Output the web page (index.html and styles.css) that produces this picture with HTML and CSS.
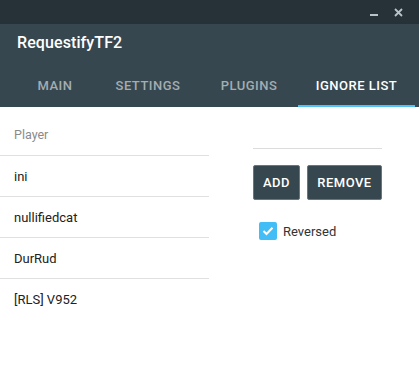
FILE: index.html
```html
<!DOCTYPE html>
<html lang="en">
<head>
    <meta charset="UTF-8">
    <meta name="viewport" content="width=device-width, initial-scale=1.0">
    <title>RequestifyTF2</title>
    <link rel="stylesheet" href="styles.css">
</head>
<body>

<div class="window">
    <div class="titlebar">
        <span class="win-btn win-min"></span>
        <span class="win-btn win-close">
            <svg width="9" height="9" viewBox="0 0 9 9"><path d="M1 1L8 8M8 1L1 8" stroke="#b9c3c8" stroke-width="1.8"/></svg>
        </span>
    </div>

    <div class="header">
        <div class="app-title">RequestifyTF2</div>
        <div class="tabs">
            <div class="tab">MAIN</div>
            <div class="tab">SETTINGS</div>
            <div class="tab">PLUGINS</div>
            <div class="tab active">IGNORE LIST</div>
        </div>
    </div>

    <div class="content">
        <div class="player-list">
            <div class="row head">Player</div>
            <div class="row">ini</div>
            <div class="row">nullifiedcat</div>
            <div class="row">DurRud</div>
            <div class="row last">[RLS] V952</div>
        </div>

        <div class="side">
            <div class="text-field"></div>
            <div class="actions">
                <button class="btn btn-add">ADD</button>
                <button class="btn btn-remove">REMOVE</button>
            </div>
            <label class="check">
                <span class="check-box">
                    <svg width="12" height="10" viewBox="0 0 12 10"><path d="M1.5 5L4.5 8L10.5 1.8" fill="none" stroke="#fff" stroke-width="2"/></svg>
                </span>
                Reversed
            </label>
        </div>
    </div>
</div>

</body>
</html>
```

FILE: styles.css
```css
body { margin: 0; font-family: Roboto, "Liberation Sans", sans-serif; background: #fff; }
.window { width: 419px; height: 368px; overflow: hidden; }

.titlebar { height: 24px; background: #263238; display: flex; justify-content: flex-end; align-items: center; padding-right: 16px; gap: 16px; box-sizing: border-box; }
.win-btn { display: block; width: 9px; height: 9px; position: relative; }
.win-min::after { content: ""; position: absolute; left: 1px; top: 6px; width: 8px; height: 2px; background: #b9c3c8; }
.win-close svg { display: block; }

.header { background: #37474f; height: 83px; box-sizing: border-box; }
.app-title { color: #fff; font-size: 16px; font-weight: 500; line-height: 20px; padding: 9px 0 0 17px; height: 39px; box-sizing: border-box; letter-spacing: 0.1px; }
.tabs { display: flex; height: 44px; padding-left: 14px; }
.tab { color: #a3adb2; font-size: 13px; font-weight: 500; letter-spacing: 0.5px; display: flex; align-items: center; justify-content: center; box-sizing: border-box; border-bottom: 2px solid transparent; padding-top: 2px; }
.tab:nth-child(1) { width: 82px; }
.tab:nth-child(2) { width: 104px; }
.tab:nth-child(3) { width: 98px; }
.tab:nth-child(4) { width: 117px; }
.tab.active { color: #fff; border-bottom-color: #4fc3f7; }

.content { display: flex; gap: 44px; padding-top: 8px; }
.player-list { width: 209px; }
.row { height: 40px; line-height: 42px; border-bottom: 1px solid #e0e0e0; padding-left: 14px; font-size: 13px; color: #212121; }
.row.head { color: #8a8a8a; font-size: 12.5px; line-height: 40px; }
.row.last { border-bottom: none; }

.side { width: 129px; }
.text-field { height: 26px; margin-top: 7px; border-bottom: 1px solid #dcdcdc; }
.actions { display: flex; gap: 7px; margin-top: 16px; }
.btn { height: 35px; background: #37474f; color: #fff; border: 1px solid #667780; border-radius: 2px; font-family: Roboto, "Liberation Sans", sans-serif; font-size: 13px; font-weight: 500; letter-spacing: 0.5px; padding: 0; cursor: pointer; }
.btn-add { width: 47px; }
.btn-remove { width: 75px; }
.check { display: flex; align-items: center; gap: 6px; margin-top: 22px; margin-left: 6px; font-size: 13px; color: #333; }
.check-box { width: 18px; height: 18px; background: #42bdf6; border-radius: 2px; display: flex; align-items: center; justify-content: center; }
.check-box svg { display: block; }
```
